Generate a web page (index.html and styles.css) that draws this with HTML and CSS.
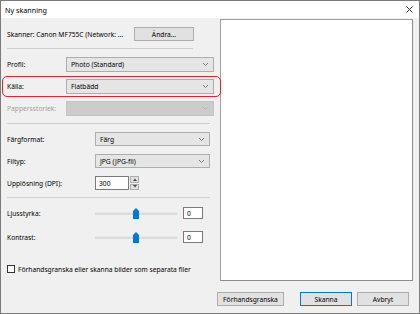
FILE: index.html
```html
<!DOCTYPE html>
<html lang="sv">
<head>
    <meta charset="UTF-8">
    <title>Ny skanning</title>
    <link rel="stylesheet" href="styles.css">
</head>
<body>
    <div class="window">
        <div class="titlebar">
            <span class="title">Ny skanning</span>
            <svg class="close" width="7" height="7" viewBox="0 0 7 7">
                <path d="M0.5 0.5 L6.5 6.5 M6.5 0.5 L0.5 6.5" stroke="#333" stroke-width="1" fill="none"/>
            </svg>
        </div>

        <div class="main">
            <div class="settings">
                <div class="scanner-row">
                    <span class="scanner-name">Skanner: Canon MF755C (Network: ...</span>
                    <button class="btn btn-change">Ändra...</button>
                </div>
                <div class="sep sep-short"></div>

                <div class="row">
                    <label class="label label-top">Profil:</label>
                    <div class="select select-top">
                        <span>Photo (Standard)</span>
                        <svg class="chev" width="5" height="3" viewBox="0 0 5 3"><path d="M0 0 L2.5 2.5 L5 0" stroke="#777" fill="none"/></svg>
                    </div>
                </div>
                <div class="row row-marked">
                    <label class="label label-top">Källa:</label>
                    <div class="select select-top">
                        <span>Flatbädd</span>
                        <svg class="chev" width="5" height="3" viewBox="0 0 5 3"><path d="M0 0 L2.5 2.5 L5 0" stroke="#777" fill="none"/></svg>
                    </div>
                </div>
                <div class="row">
                    <label class="label label-top disabled">Pappersstorlek:</label>
                    <div class="select select-top select-disabled">
                        <span></span>
                        <svg class="chev" width="5" height="3" viewBox="0 0 5 3"><path d="M0 0 L2.5 2.5 L5 0" stroke="#b5b5b5" fill="none"/></svg>
                    </div>
                </div>
                <div class="sep sep-mid"></div>

                <div class="row">
                    <label class="label label-wide">Färgformat:</label>
                    <div class="select select-wide">
                        <span>Färg</span>
                        <svg class="chev" width="5" height="3" viewBox="0 0 5 3"><path d="M0 0 L2.5 2.5 L5 0" stroke="#777" fill="none"/></svg>
                    </div>
                </div>
                <div class="row">
                    <label class="label label-wide">Filtyp:</label>
                    <div class="select select-wide">
                        <span>JPG (JPG-fil)</span>
                        <svg class="chev" width="5" height="3" viewBox="0 0 5 3"><path d="M0 0 L2.5 2.5 L5 0" stroke="#777" fill="none"/></svg>
                    </div>
                </div>
                <div class="row">
                    <label class="label label-wide">Upplösning (DPI):</label>
                    <div class="spin">
                        <div class="spin-input">300</div>
                        <div class="spin-buttons">
                            <div class="spin-btn"><svg width="4" height="3" viewBox="0 0 4 3"><path d="M0 3 L2 0.5 L4 3 Z" fill="#444"/></svg></div>
                            <div class="spin-btn"><svg width="4" height="3" viewBox="0 0 4 3"><path d="M0 0 L2 2.5 L4 0 Z" fill="#444"/></svg></div>
                        </div>
                    </div>
                </div>
                <div class="sep sep-mid sep-low"></div>

                <div class="row row-slider">
                    <label class="label label-wide">Ljusstyrka:</label>
                    <div class="slider">
                        <div class="track"></div>
                        <svg class="thumb" width="6" height="11" viewBox="0 0 6 11"><path d="M0 3 L3 0 L6 3 V11 H0 Z" fill="#0078d7"/></svg>
                    </div>
                    <div class="value">0</div>
                </div>
                <div class="row row-slider">
                    <label class="label label-wide">Kontrast:</label>
                    <div class="slider">
                        <div class="track"></div>
                        <svg class="thumb" width="6" height="11" viewBox="0 0 6 11"><path d="M0 3 L3 0 L6 3 V11 H0 Z" fill="#0078d7"/></svg>
                    </div>
                    <div class="value">0</div>
                </div>

                <div class="check-row">
                    <span class="checkbox"></span>
                    <span>Förhandsgranska eller skanna bilder som separata filer</span>
                </div>
            </div>

            <div class="preview"></div>
        </div>

        <div class="actions">
            <button class="btn btn-preview">Förhandsgranska</button>
            <button class="btn btn-default">Skanna</button>
            <button class="btn btn-cancel">Avbryt</button>
        </div>
    </div>
</body>
</html>
```

FILE: styles.css
```css
:root {
    --face: #f0f0f0;
    --btn-face: #e1e1e1;
    --btn-border: #adadad;
    --accent: #0078d7;
    --mark: #e8202a;
}

* {
    box-sizing: border-box;
}

body {
    margin: 0;
    font-family: 'Noto Sans', 'Liberation Sans', sans-serif;
    font-size: 6.7px;
    color: #000;
}

.window {
    width: 420px;
    height: 314px;
    border: 1px solid #7a7a7a;
    background-color: var(--face);
    display: flex;
    flex-direction: column;
}

.titlebar {
    height: 17px;
    background-color: #fff;
    display: flex;
    align-items: center;
    justify-content: space-between;
    padding: 0 6px 0 4px;
}

.title {
    font-size: 7.2px;
}

.main {
    display: flex;
    height: 263px;
}

.settings {
    width: 219px;
    padding: 9px 0 0 6px;
    display: flex;
    flex-direction: column;
}

.scanner-row {
    height: 14px;
    display: flex;
    align-items: center;
    justify-content: space-between;
    width: 187px;
}

.btn {
    font-family: inherit;
    font-size: 6.7px;
    background-color: var(--btn-face);
    border: 1px solid var(--btn-border);
    padding: 0;
    height: 14px;
    color: #000;
}

.btn-change {
    width: 60px;
    height: 14px;
}

.sep {
    height: 1px;
    background-color: #cfcfcf;
}

.sep-short {
    width: 186px;
    margin: 7px 0 4px;
}

.sep-mid {
    width: 203px;
    margin: 4px 0 4px;
}

.sep-low {
    margin: 3px 0 3px;
}

.row {
    height: 22px;
    display: flex;
    align-items: center;
    position: relative;
}

.row-marked::after {
    content: '';
    position: absolute;
    top: 1px;
    left: -5px;
    width: 217px;
    height: 19px;
    border: 1.6px solid var(--mark);
    border-radius: 5px;
}

.label {
    flex-shrink: 0;
}

.label-top {
    width: 59px;
}

.label-wide {
    width: 88px;
}

.disabled {
    color: #a0a0a0;
}

.select {
    height: 15px;
    background-color: #e5e5e5;
    border: 1px solid var(--btn-border);
    display: flex;
    align-items: center;
    justify-content: space-between;
    padding: 0 5px 0 4px;
}

.select-top {
    width: 148px;
}

.select-wide {
    width: 115px;
    height: 14px;
}

.select-disabled {
    background-color: #cccccc;
    border-color: #c4c4c4;
}

.spin {
    display: flex;
    height: 14px;
}

.spin-input {
    width: 34px;
    background-color: #fff;
    border: 1px solid #7a7a7a;
    padding: 2px 0 0 3px;
}

.spin-buttons {
    width: 9px;
    margin-left: 1px;
    display: flex;
    flex-direction: column;
    gap: 1px;
}

.spin-btn {
    flex: 1;
    background-color: var(--btn-face);
    border: 1px solid var(--btn-border);
    display: flex;
    align-items: center;
    justify-content: center;
}

.row-slider {
    height: 24px;
}

.slider {
    width: 82px;
    height: 11px;
    position: relative;
    display: flex;
    align-items: center;
}

.track {
    width: 100%;
    height: 3px;
    background-color: #dcdcdc;
    border-top: 1px solid #e7e7e7;
}

.thumb {
    position: absolute;
    left: 38px;
    top: 0;
}

.value {
    width: 20px;
    height: 12px;
    margin-left: 6px;
    background-color: #fff;
    border: 1px solid #7a7a7a;
    padding: 1px 0 0 3px;
}

.check-row {
    margin-top: 13px;
    height: 14px;
    display: flex;
    align-items: center;
    gap: 3px;
}

.checkbox {
    width: 8px;
    height: 8px;
    background-color: #fff;
    border: 1px solid #333;
}

.preview {
    width: 193px;
    margin-top: 1px;
    height: 262px;
    background-color: #fff;
    border: 1px solid #a0a0a0;
    border-right-color: #8c8c8c;
    border-bottom-color: #8c8c8c;
}

.actions {
    display: flex;
    justify-content: flex-end;
    padding-right: 10px;
    margin-top: 11px;
}

.btn-preview {
    width: 67px;
}

.btn-default {
    width: 52px;
    margin-left: 16px;
    border-color: var(--accent);
}

.btn-cancel {
    width: 52px;
    margin-left: 5px;
}
```
